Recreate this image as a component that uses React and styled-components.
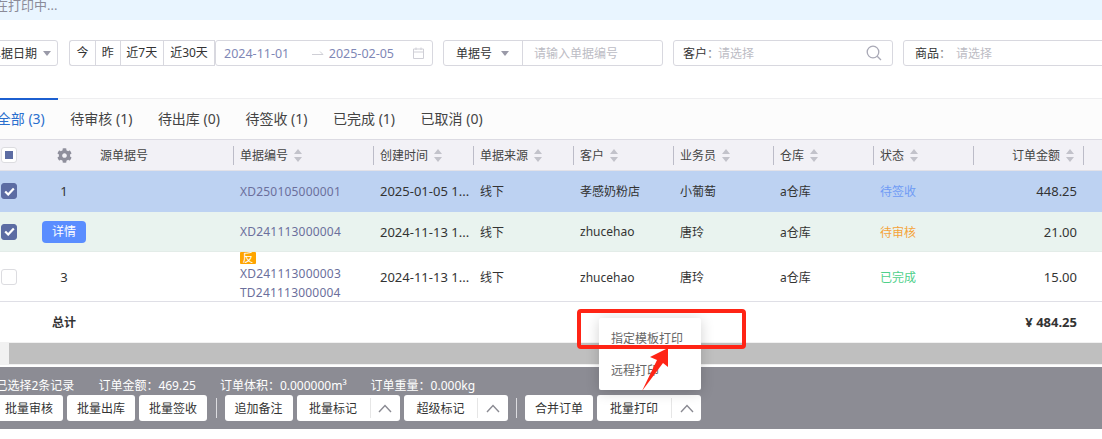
import React from 'react';
import styled, { createGlobalStyle } from 'styled-components';
import { FaCog } from 'react-icons/fa';

const GlobalStyle = createGlobalStyle`
  body {
    margin: 0;
    background: #fff;
    font-family: "Noto Sans", "Noto Sans CJK SC", sans-serif;
    font-size: 12px;
    color: #333;
  }
`;

const COLUMNS = '38px 52px 143px 140px 100px 100px 100px 100px 100px 100px 110px 19px';

const Page = styled.div`
  position: relative;
  width: 1102px;
  height: 439px;
  overflow: hidden;
  background: #fff;
`;
const Banner = styled.div`
  height: 20px;
  background: #e9f5ff;
  color: #8b8b98;
  font-size: 13px;
  line-height: 11px;
  white-space: nowrap;
  text-indent: -18px;
`;
const FilterRow = styled.div`
  display: flex;
  align-items: center;
  height: 26px;
  margin: 20px 0 32px -25px;
  white-space: nowrap;
`;
const Box = styled.div`
  display: flex;
  align-items: center;
  flex: none;
  box-sizing: border-box;
  width: ${(p) => p.$width}px;
  height: 26px;
  margin-right: ${(p) => p.$gap || 0}px;
  border: 1px solid #d8d8df;
  border-radius: 3px;
  background: #fff;
`;
const SelectText = styled.span`
  color: #333;
  margin-left: ${(p) => p.$left}px;
`;
const Caret = styled.i`
  width: 0;
  height: 0;
  margin-left: ${(p) => p.$left}px;
  border-left: 4px solid transparent;
  border-right: 4px solid transparent;
  border-top: 5px solid #9a9aa8;
`;
const Quick = styled.div`
  display: flex;
  flex: none;
  box-sizing: border-box;
  height: 26px;
  border: 1px solid #d8d8df;
  border-right: 0;
  border-radius: 3px 0 0 3px;
`;
const QuickItem = styled.span`
  box-sizing: border-box;
  width: ${(p) => p.$width}px;
  border-right: 1px solid #d8d8df;
  line-height: 24px;
  text-align: center;
`;
const DateText = styled.span`
  color: #7f88b6;
  font-size: 12.5px;
  margin-left: ${(p) => p.$left}px;
`;
const Divider = styled.i`
  align-self: stretch;
  width: 1px;
  margin-left: ${(p) => p.$left}px;
  background: #d8d8df;
`;
const Placeholder = styled.span`
  color: #bcbcc4;
  margin-left: ${(p) => p.$left}px;
`;
const FieldLabel = styled.span`
  color: #333;
  margin-left: ${(p) => p.$left}px;
  &::after {
    content: '：';
    color: #888;
  }
`;
const FilterIcon = styled.svg`
  flex: none;
  margin-left: auto;
  margin-right: ${(p) => p.$right}px;
`;
const Tabs = styled.div`
  height: 40px;
  border-top: 1px solid #eeeef0;
  background: #fcfcfc;
`;
const TabList = styled.div`
  display: flex;
  margin-left: -16px;
`;
const Tab = styled.div`
  box-sizing: border-box;
  height: 40px;
  margin-top: -1px;
  padding: 0 12.75px;
  border-top: 2px solid ${(p) => (p.$active ? '#1c5fd0' : 'transparent')};
  color: ${(p) => (p.$active ? '#2a6fce' : '#444')};
  font-size: 14px;
  line-height: 38px;
  white-space: nowrap;
`;
const HeaderRow = styled.div`
  display: grid;
  grid-template-columns: ${COLUMNS};
  align-items: center;
  box-sizing: border-box;
  height: 32px;
  border-top: 1px solid #dcdbe3;
  border-bottom: 1px solid #e2e1e8;
  background: #f2f1f6;
`;
const HeadCell = styled.div`
  display: flex;
  align-items: center;
  justify-content: ${(p) => (p.$right ? 'flex-end' : 'flex-start')};
  box-sizing: border-box;
  height: 19px;
  padding: ${(p) => (p.$right ? '0 9px 0 0' : '0 0 0 6px')};
  border-left: 1px solid #bcbcc8;
  color: #444;
  white-space: nowrap;
`;
const SourceHead = styled.div`
  padding-left: 10px;
  color: #444;
`;
const SortIcon = styled.svg`
  flex: none;
  margin-left: 6px;
`;
const CheckSlot = styled.div`
  display: flex;
  padding-left: 1px;
`;
const Check = styled.span`
  display: flex;
  align-items: center;
  justify-content: center;
  box-sizing: border-box;
  width: 16px;
  height: 16px;
  border-radius: 3px;
  border: 1px solid ${(p) => (p.$state === 'on' ? '#5c6ca3' : '#dcdce0')};
  background: ${(p) => (p.$state === 'on' ? '#5c6ca3' : '#fff')};
  &::before {
    content: '';
    display: ${(p) => (p.$state === 'some' ? 'block' : 'none')};
    width: 8px;
    height: 8px;
    background: #5c6ca3;
  }
`;
const GearSlot = styled.div`
  display: flex;
  justify-content: center;
  color: #8f8f9c;
`;
const Row = styled.div`
  display: grid;
  grid-template-columns: ${COLUMNS};
  align-items: center;
  box-sizing: border-box;
  height: ${(p) => p.$height}px;
  background: ${(p) => p.$bg};
  border-bottom: 1px solid ${(p) => p.$line};
`;
const IndexCell = styled.div`
  display: flex;
  justify-content: center;
  color: #333;
  font-size: 13px;
`;
const DetailButton = styled.span`
  flex: none;
  width: 44px;
  height: 22px;
  margin-top: 1px;
  border-radius: 4px;
  background: #5a8dff;
  color: #fff;
  font-size: 12px;
  line-height: 22px;
  text-align: center;
`;
const Cell = styled.div`
  padding-left: 7px;
  color: ${(p) => p.$color || '#333'};
  font-size: ${(p) => p.$size || 12}px;
  white-space: nowrap;
`;
const DocCell = styled.div`
  display: flex;
  flex-direction: column;
  align-items: flex-start;
  padding-left: 7px;
  color: #6b6f9c;
  letter-spacing: 0.2px;
  line-height: 19px;
`;
const Badge = styled.span`
  width: 16px;
  height: 12px;
  border-radius: 1px;
  background: #ffa400;
  color: #fff;
  font-size: 11px;
  letter-spacing: 0;
  line-height: 12px;
  text-align: center;
`;
const Amount = styled.div`
  padding-right: 6px;
  color: #333;
  font-size: 13px;
  text-align: right;
`;
const TotalRow = styled(Row)`
  border-bottom: 0;
  font-weight: 700;
`;
const TotalLabel = styled.div`
  color: #333;
  text-align: center;
`;
const TotalAmount = styled(Amount)`
  grid-column: 11;
`;
const ScrollTrack = styled.div`
  display: flex;
  box-sizing: border-box;
  height: 23px;
  padding: 1px 0 0 9px;
  background: #f1f1f1;
`;
const ScrollThumb = styled.div`
  flex: 1;
  height: 21px;
  background: #bfbfbf;
`;
const BottomBar = styled.div`
  box-sizing: border-box;
  height: 62px;
  margin-top: 2px;
  padding-top: 10px;
  background: #8c8c94;
`;
const Stats = styled.div`
  display: flex;
  gap: 24px;
  height: 18px;
  margin-left: -4.5px;
  color: #fff;
  line-height: 17px;
  white-space: nowrap;
`;
const ActionRow = styled.div`
  display: flex;
  align-items: center;
  height: 26px;
  margin-left: -5px;
  white-space: nowrap;
`;
const Action = styled.div`
  display: flex;
  align-items: center;
  justify-content: ${(p) => (p.$split ? 'flex-start' : 'center')};
  flex: none;
  box-sizing: border-box;
  width: ${(p) => p.$width}px;
  height: 26px;
  margin-right: 4px;
  border-radius: 3px;
  background: #fff;
  color: #333;
`;
const ActionLabel = styled.span`
  flex: none;
  width: ${(p) => p.$width}px;
  text-align: center;
`;
const ActionArrow = styled.span`
  display: flex;
  flex: 1;
  align-items: center;
  justify-content: center;
  height: 20px;
  border-left: 1px solid #e6e6e6;
`;
const BarRule = styled.i`
  flex: none;
  width: 1px;
  height: 20px;
  margin: 0 8px 0 4.5px;
  background: #dcdce0;
`;
const Menu = styled.div`
  position: absolute;
  left: 599px;
  top: 318px;
  box-sizing: border-box;
  width: 102px;
  height: 72px;
  padding-top: 5px;
  border-radius: 2px;
  background: #fff;
  box-shadow: 0 2px 14px rgba(0, 0, 0, 0.18);
`;
const MenuItem = styled.div`
  height: 32px;
  padding-left: 12px;
  color: #666;
  line-height: 32px;
  white-space: nowrap;
`;
const Callout = styled.div`
  position: absolute;
  left: 577px;
  top: 309px;
  box-sizing: border-box;
  width: 169px;
  height: 40px;
  border: 4px solid #ff2415;
  border-radius: 4px;
`;
const Pointer = styled.svg`
  position: absolute;
  left: 640px;
  top: 346px;
`;

const tabs = ['全部 (3)', '待审核 (1)', '待出库 (0)', '待签收 (1)', '已完成 (1)', '已取消 (0)'];
const heads = ['单据编号', '创建时间', '单据来源', '客户', '业务员', '仓库', '状态'];

const rows = [
  { key: 1, height: 41, bg: '#bdd2f2', line: '#bdd2f2', on: true, doc: ['XD250105000001'], time: '2025-01-05 1...', customer: '孝感奶粉店', staff: '小葡萄', status: '待签收', color: '#6f9bf5', amount: '448.25' },
  { key: 2, height: 40, bg: '#e9f3ef', line: '#e3ece8', on: true, detail: true, doc: ['XD241113000004'], time: '2024-11-13 1...', customer: 'zhucehao', staff: '唐玲', status: '待审核', color: '#f5a33a', amount: '21.00' },
  { key: 3, height: 50, bg: '#fff', line: '#dfdfe6', badge: true, doc: ['XD241113000003', 'TD241113000004'], time: '2024-11-13 1...', customer: 'zhucehao', staff: '唐玲', status: '已完成', color: '#4fd08a', amount: '15.00' },
];

const Sort = () => (
  <SortIcon width="8" height="13" viewBox="0 0 8 13">
    <path d="M4 0l4 5H0z M0 8h8l-4 5z" fill="#c2c2ca" />
  </SortIcon>
);

const Chevron = () => (
  <svg width="14" height="9" viewBox="0 0 14 9" fill="none">
    <path d="M1 8l6-6.5L13 8" stroke="#8a8a92" strokeWidth="1.4" />
  </svg>
);

const Tick = () => (
  <svg width="11" height="9" viewBox="0 0 11 9" fill="none">
    <path d="M1.2 4.5l3 3L9.8 1.4" stroke="#fff" strokeWidth="2.2" />
  </svg>
);

const App = () => (
  <Page>
    <GlobalStyle />
    <Banner>正在打印中...</Banner>
    <FilterRow>
      <Box $width={83} $gap={11}>
        <SelectText $left={13}>单据日期</SelectText>
        <Caret $left={6} />
      </Box>
      <Quick>
        <QuickItem $width={26}>今</QuickItem>
        <QuickItem $width={24.5}>昨</QuickItem>
        <QuickItem $width={43.5}>近7天</QuickItem>
        <QuickItem $width={51}>近30天</QuickItem>
      </Quick>
      <Box $width={217.5} $gap={10.5}>
        <DateText $left={8}>2024-11-01</DateText>
        <svg width="12" height="6" viewBox="0 0 12 6" style={{ marginLeft: 23 }}>
          <path d="M0 4.5h11L8 1.5" fill="none" stroke="#cfcfd6" />
        </svg>
        <DateText $left={4.5}>2025-02-05</DateText>
        <FilterIcon $right={8} width="11" height="12" viewBox="0 0 11 12" fill="none">
          <path d="M.5 2h10v9.5H.5zM.5 5h10M3 .5v2.5M8 .5v2.5" stroke="#cfcfd6" />
        </FilterIcon>
      </Box>
      <Box $width={220} $gap={10}>
        <SelectText $left={12}>单据号</SelectText>
        <Caret $left={9} />
        <Divider $left={13} />
        <Placeholder $left={11}>请输入单据编号</Placeholder>
      </Box>
      <Box $width={219.5} $gap={10.5}>
        <FieldLabel $left={9}>客户</FieldLabel>
        <Placeholder $left={-1}>请选择</Placeholder>
        <FilterIcon $right={10} width="16" height="16" viewBox="0 0 16 16" fill="none">
          <circle cx="7" cy="7" r="5.8" stroke="#a9a9b6" strokeWidth="1.3" />
          <path d="M11.2 11.2L15 15" stroke="#a9a9b6" strokeWidth="1.3" />
        </FilterIcon>
      </Box>
      <Box $width={260}>
        <FieldLabel $left={11}>商品</FieldLabel>
        <Placeholder $left={5}>请选择</Placeholder>
      </Box>
    </FilterRow>
    <Tabs>
      <TabList>
        {tabs.map((t, i) => (
          <Tab key={t} $active={i === 0}>{t}</Tab>
        ))}
      </TabList>
    </Tabs>
    <HeaderRow>
      <CheckSlot><Check $state="some" /></CheckSlot>
      <GearSlot><FaCog size={15} /></GearSlot>
      <SourceHead>源单据号</SourceHead>
      {heads.map((h) => (
        <HeadCell key={h}>{h}<Sort /></HeadCell>
      ))}
      <HeadCell $right>订单金额<Sort /></HeadCell>
      <HeadCell />
    </HeaderRow>
    {rows.map((r) => (
      <Row key={r.key} $height={r.height} $bg={r.bg} $line={r.line}>
        <CheckSlot>
          <Check $state={r.on ? 'on' : 'off'}>{r.on && <Tick />}</Check>
        </CheckSlot>
        <IndexCell>
          {r.detail ? <DetailButton>详情</DetailButton> : r.key}
        </IndexCell>
        <div />
        <DocCell>
          {r.badge && <Badge>反</Badge>}
          {r.doc.map((d) => <span key={d}>{d}</span>)}
        </DocCell>
        <Cell $size={13}>{r.time}</Cell>
        <Cell>线下</Cell>
        <Cell>{r.customer}</Cell>
        <Cell>{r.staff}</Cell>
        <Cell>a仓库</Cell>
        <Cell $color={r.color}>{r.status}</Cell>
        <Amount>{r.amount}</Amount>
      </Row>
    ))}
    <TotalRow $height={40} $bg="#fff" $line="#fff">
      <div />
      <TotalLabel>总计</TotalLabel>
      <TotalAmount>¥ 484.25</TotalAmount>
    </TotalRow>
    <ScrollTrack><ScrollThumb /></ScrollTrack>
    <BottomBar>
      <Stats>
        <span>已选择2条记录</span>
        <span>订单金额：469.25</span>
        <span>订单体积：0.000000m³</span>
        <span>订单重量：0.000kg</span>
      </Stats>
      <ActionRow>
        <Action $width={68}>批量审核</Action>
        <Action $width={68}>批量出库</Action>
        <Action $width={68}>批量签收</Action>
        <BarRule />
        <Action $width={68}>追加备注</Action>
        <Action $width={103.5} $split>
          <ActionLabel $width={73}>批量标记</ActionLabel>
          <ActionArrow><Chevron /></ActionArrow>
        </Action>
        <Action $width={103.5} $split>
          <ActionLabel $width={73}>超级标记</ActionLabel>
          <ActionArrow><Chevron /></ActionArrow>
        </Action>
        <BarRule />
        <Action $width={68}>合并订单</Action>
        <Action $width={104} $split>
          <ActionLabel $width={74}>批量打印</ActionLabel>
          <ActionArrow><Chevron /></ActionArrow>
        </Action>
      </ActionRow>
    </BottomBar>
    <Menu>
      <MenuItem>指定模板打印</MenuItem>
      <MenuItem>远程打印</MenuItem>
    </Menu>
    <Callout />
    <Pointer width="32" height="48" viewBox="0 0 32 48">
      <path d="M28 2L10 11l7 3L2 45l21-28 5 4z" fill="#ff2415" />
    </Pointer>
  </Page>
);

export default App;
